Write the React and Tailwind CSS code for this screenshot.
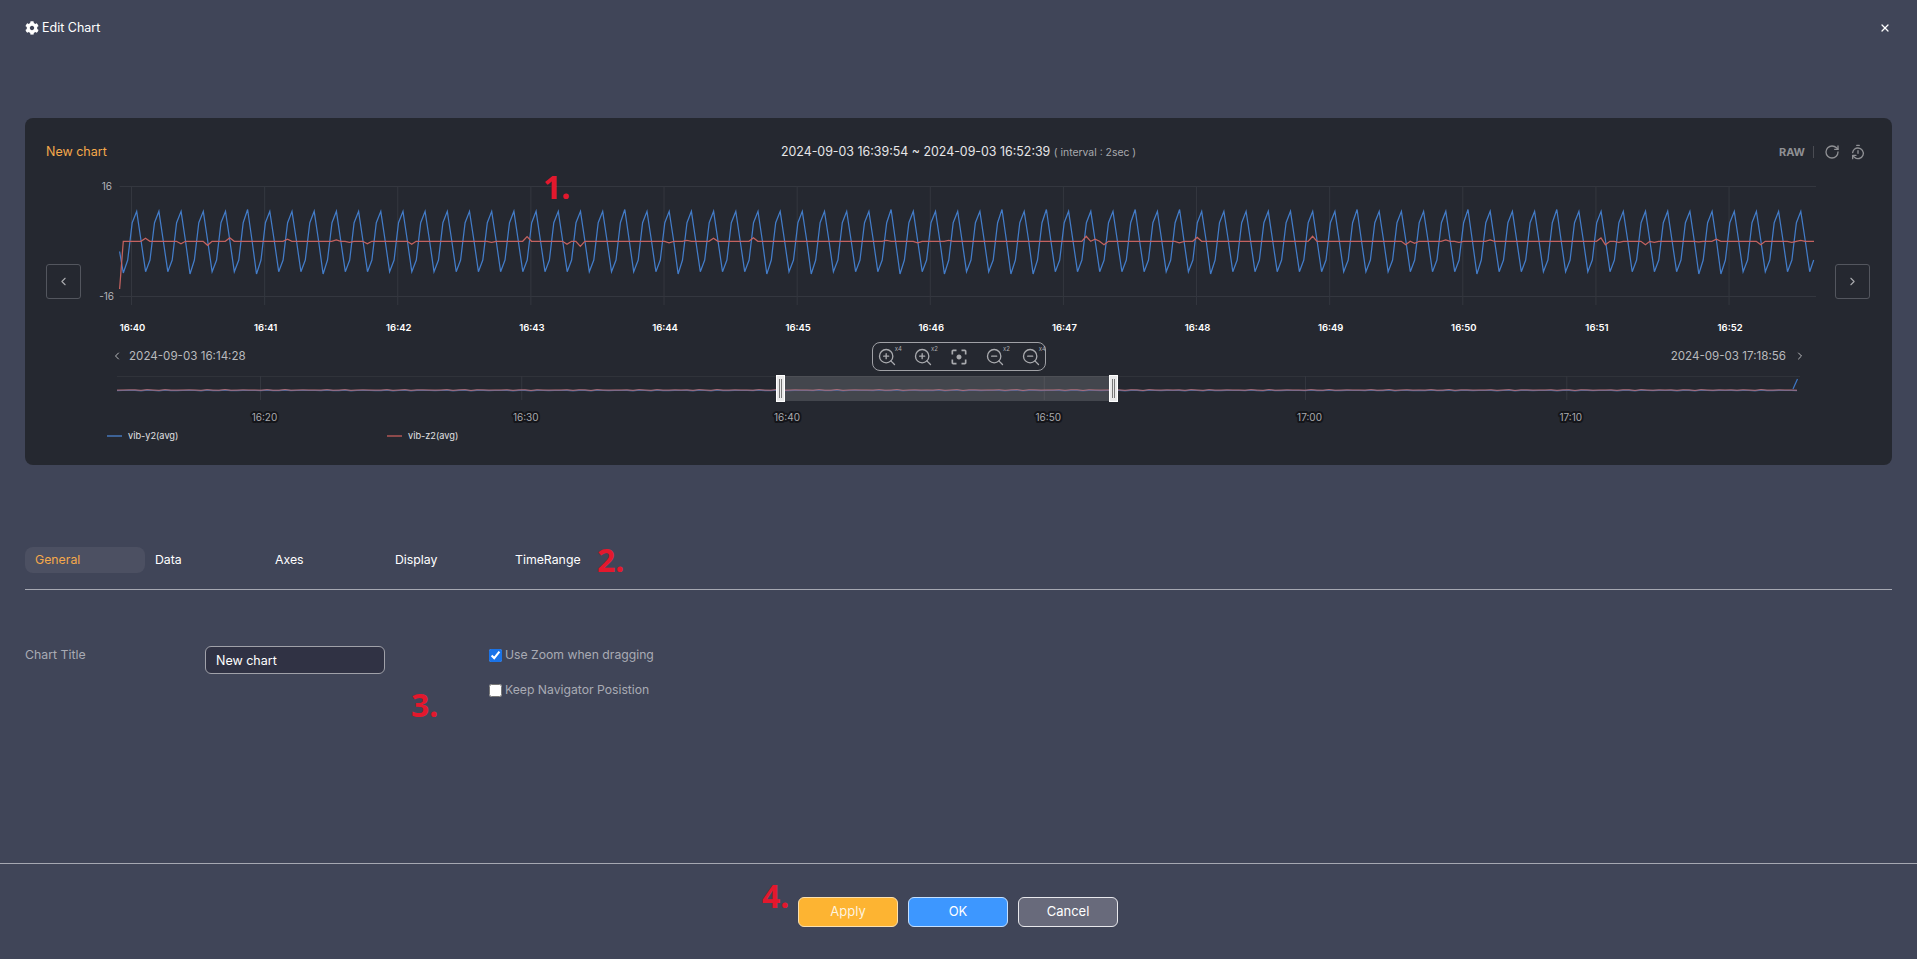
import React from "react";
import { ChevronLeft, ChevronRight, RotateCw, TimerReset, X, ZoomIn, ZoomOut } from "lucide-react";
import { FaCog } from "react-icons/fa";
import { MdFilterCenterFocus } from "react-icons/md";

// chart data, read off the picture (page coordinates, the svg viewBoxes use them too)
const STEP = 133.13 / 30;
const PERIOD = STEP * 5;
const tallPeaks = [5, 22, 34, 39, 41, 45, 47, 55, 60, 64];
const deepTroughs = [2, 5, 8, 24, 28, 30, 34, 36, 39, 40, 48, 60, 70, 71];
const bumps = [
  [145, -3], [181, 2.5], [207, 4], [230.6, -3.5], [287, -2], [335.5, -1.5], [349, 1], [367, 2.5],
  [411, 3], [490, 1], [527, -4.7], [566.7, 3], [581.7, 5], [669, 1.5], [685.7, -1], [713, -3],
  [753, -3.5], [886.7, -1], [916.7, 1.5], [948, -1], [1086, -5], [1095, -2], [1104, 3.5],
  [1178, 1.5], [1196.7, -4], [1312.7, -5], [1406, 3.5], [1415, 2], [1445, -1.5], [1460, 1],
  [1490, -1.5], [1600, -3.5], [1606, 3.5], [1620, 1], [1645, 3.5], [1654, 1], [1700, 0.5],
  [1716.7, -2], [1760, 3.5], [1790, 1], [1801.7, -1],
];

const bluePoints = () => {
  const pts = [[119.6, 251.5], [123.3, 273], [127.7, 260], [132.2, 222.7]];
  for (let k = 0; k < 76; k++) {
    const p = 136.7 + PERIOD * k;
    const peak = tallPeaks.includes(k) ? 209.5 : 211.3;
    const trough = deepTroughs.includes(k) ? 274 : 271.7;
    pts.push([p, peak], [p + STEP, 241], [p + STEP * 2, trough]);
    if (k === 75) {
      pts.push([p + STEP * 2 + 4, 260]);
      break;
    }
    pts.push([p + STEP * 3, 260], [p + STEP * 4, 222.7]);
  }
  return pts.map(([x, y]) => `${x.toFixed(1)},${y}`).join(" ");
};

const redPoints = () => {
  const pts = [[119.6, 289], [123.3, 241.3]];
  for (let x = 127.7; x < 1812; x += STEP) {
    const hit = bumps.find(([bx]) => Math.abs(bx - x) <= STEP / 2);
    pts.push([x, 241.3 + (hit ? hit[1] : 0)]);
  }
  pts.push([1814, 241.3]);
  return pts.map(([x, y]) => `${x.toFixed(1)},${y}`).join(" ");
};

const navLine = (shift, amp) => {
  const pts = [];
  for (let x = 117; x <= 1797; x += 6) {
    pts.push(`${x},${(390 + shift + Math.sin(x * 0.37) * Math.sin(x * 0.051) * amp).toFixed(1)}`);
  }
  return pts.join(" ");
};

const minutes = ["16:40", "16:41", "16:42", "16:43", "16:44", "16:45", "16:46", "16:47", "16:48", "16:49", "16:50", "16:51", "16:52"];
const navTicks = ["16:20", "16:30", "16:40", "16:50", "17:00", "17:10"];

const MainChart = () => (
  <svg viewBox="85 175 1745 160" className="block w-[1745px] h-[160px] ml-1 shrink-0">
    <line x1="119.6" x2="1816" y1="186.5" y2="186.5" stroke="#34373f" />
    <line x1="119.6" x2="1816" y1="296.5" y2="296.5" stroke="#34373f" />
    {minutes.map((m, i) => (
      <line key={m} x1={131.5 + 133.13 * i} x2={131.5 + 133.13 * i} y1="186" y2="305" stroke="#34373f" />
    ))}
    <text x="112" y="190" textAnchor="end" className="fill-[#b4b5b9] text-[10px]">16</text>
    <text x="114" y="300" textAnchor="end" className="fill-[#b4b5b9] text-[10px]">-16</text>
    <polyline points={bluePoints()} fill="none" stroke="#437cc8" strokeWidth="1.25" />
    <polyline points={redPoints()} fill="none" stroke="#c4625f" strokeWidth="1.25" />
    {minutes.map((m, i) => (
      <text key={m} x={132.5 + 133.13 * i} y="331" textAnchor="middle" className="fill-white text-[9.5px] font-semibold">{m}</text>
    ))}
  </svg>
);

const Navigator = () => (
  <svg viewBox="85 372 1745 54" className="block w-[1745px] h-[54px] ml-[60px] mt-px">
    <line x1="117" x2="1800" y1="376.5" y2="376.5" stroke="#30333a" />
    {navTicks.map((t, i) => (
      <line key={t} x1={260.5 + 261.26 * i} x2={260.5 + 261.26 * i} y1="376" y2="400" stroke="#34373f" />
    ))}
    <rect x="780" y="376" width="333" height="25" fill="#ffffff" fillOpacity="0.14" />
    <polyline points={navLine(0.5, 0.4)} fill="none" stroke="#3f6296" strokeWidth="1.2" />
    <polyline points={navLine(0, 0.4)} fill="none" stroke="#b8707a" strokeWidth="1" />
    <polyline points="1793,389 1797.5,379" fill="none" stroke="#3f78c6" strokeWidth="1.2" />
    {[776.5, 1109.5].map((x) => (
      <g key={x}>
        <rect x={x} y="375.5" width="8" height="26" fill="#e9e9ea" stroke="#ffffff" />
        <line x1={x + 3} x2={x + 3} y1="379" y2="398" stroke="#777" />
        <line x1={x + 5} x2={x + 5} y1="379" y2="398" stroke="#777" />
      </g>
    ))}
    {navTicks.map((t, i) => (
      <text
        key={t}
        x={264.5 + 261.26 * i}
        y="421"
        textAnchor="middle"
        stroke="#14151a"
        strokeWidth="4"
        strokeLinejoin="round"
        paintOrder="stroke"
        className="fill-[#a9aaae] text-[10px]"
      >
        {t}
      </text>
    ))}
  </svg>
);

const ZoomBtn = ({ Icon, label }) => (
  <span className="relative flex w-9 shrink-0 justify-center text-[#a9aaae]">
    <Icon size={20} strokeWidth={1.6} />
    {label && <span className="absolute top-[-1px] right-[3px] text-[6px] leading-none">{label}</span>}
  </span>
);

const ArrowBtn = ({ children, className }) => (
  <button className={`flex items-center justify-center w-[35px] h-[35px] mt-[89px] shrink-0 rounded-[3px] border border-[#53565e] text-[#a9aaae] ${className}`}>
    {children}
  </button>
);

const Mark = ({ className, children }) => (
  <span className={`absolute font-['Noto_Sans',sans-serif] text-[32px] leading-none font-bold text-[#e3182d] ${className}`}>
    {children}
  </span>
);

export default function App() {
  return (
    <div className="relative flex flex-col h-[959px] overflow-hidden bg-[#404558] text-white font-['Inter','Liberation_Sans',sans-serif]">
      <header className="flex items-center justify-between h-14 px-[25px]">
        <div className="flex items-center gap-[3px] text-[12.5px]">
          <FaCog size={14} />
          Edit Chart
        </div>
        <X size={12} strokeWidth={2.5} className="mr-[1px]" />
      </header>

      <section className="mx-[25px] mt-[62px] h-[347px] rounded-lg bg-[#252830]">
        <div className="grid grid-cols-[1fr_auto_1fr] items-center h-6 mt-[22px] px-[21px]">
          <span className="text-[12.5px] text-[#f5a94b]">New chart</span>
          <span className="text-[12.4px] text-[#e6e6e8]">
            2024-09-03 16:39:54 ~ 2024-09-03 16:52:39 <span className="text-[10.4px] text-[#a9aaae]">( interval : 2sec )</span>
          </span>
          <div className="flex items-center justify-end gap-[10px] pr-[5px] text-[#8f9094]">
            <span className="-mr-[2px] text-[11px] font-bold">RAW</span>
            <span className="w-px h-[12px] bg-[#4a4c53]" />
            <RotateCw size={16} />
            <TimerReset size={16} />
          </div>
        </div>

        <div className="flex pl-[21px] mt-[11px]">
          <ArrowBtn><ChevronLeft size={13} /></ArrowBtn>
          <MainChart />
          <ArrowBtn className="ml-[5px]"><ChevronRight size={13} /></ArrowBtn>
        </div>

        <div className="grid grid-cols-[1fr_auto_1fr] items-center h-[29px] mt-[7px] px-[86px] text-[11.6px] text-[#b9babd]">
          <div className="flex items-center gap-[5px]">
            <ChevronLeft size={12} />
            <span className="ml-[1px]">2024-09-03 16:14:28</span>
          </div>
          <div className="flex items-center justify-center w-[174px] h-[29px] ml-px rounded-lg border border-[#a0a1a6]">
            <ZoomBtn Icon={ZoomIn} label="x4" />
            <ZoomBtn Icon={ZoomIn} label="x2" />
            <span className="flex w-9 shrink-0 justify-center text-[#a9aaae]"><MdFilterCenterFocus size={20} /></span>
            <ZoomBtn Icon={ZoomOut} label="x2" />
            <ZoomBtn Icon={ZoomOut} label="x4" />
          </div>
          <div className="flex items-center justify-end gap-[8px]">
            <span>2024-09-03 17:18:56</span>
            <ChevronRight size={12} />
          </div>
        </div>

        <Navigator />

        <div className="flex items-center h-3 mt-1 ml-[82px] text-[9.2px] text-[#e2e2e4]">
          <div className="flex items-center gap-[6px] w-[280px]">
            <span className="w-[15px] h-[1.5px] bg-[#3d6296]" />
            vib-y2(avg)
          </div>
          <div className="flex items-center gap-[6px]">
            <span className="w-[15px] h-[1.5px] bg-[#8d4a4b]" />
            vib-z2(avg)
          </div>
        </div>
      </section>

      <nav className="flex mx-[25px] mt-[82px] pb-[16px] border-b border-[#a6a8b2] text-[12.3px]">
        {["General", "Data", "Axes", "Display", "TimeRange"].map((tab, i) => (
          <span
            key={tab}
            className={`w-[120px] h-[26px] pl-[10px] leading-[26px] rounded-lg ${i === 0 ? "bg-[#4c5062] text-[#f5a94b]" : "text-white"}`}
          >
            {tab}
          </span>
        ))}
      </nav>

      <div className="flex items-start mx-[25px] mt-[56px]">
        <label className="w-[180px] mt-[1px] text-[12.3px] leading-[16px] text-[#a9abb4]">Chart Title</label>
        <input
          readOnly
          value="New chart"
          className="w-[180px] h-[28px] px-[10px] rounded-md border border-[#a0a1a9] bg-[#303244] text-[12.5px] text-white outline-none"
        />
        <div className="flex flex-col gap-[19px] ml-[104px] mt-[1px] text-[12.2px] leading-[16px] text-[#a9abb4]">
          <label className="flex items-center gap-[3px]">
            <input type="checkbox" readOnly checked className="w-[13px] h-[13px] accent-[#1a73e8]" />
            Use Zoom when dragging
          </label>
          <label className="flex items-center gap-[3px]">
            <input type="checkbox" readOnly checked={false} className="w-[13px] h-[13px]" />
            Keep Navigator Posistion
          </label>
        </div>
      </div>

      <footer className="flex justify-center gap-[10px] mt-auto h-[96px] pt-[33px] pr-[1px] border-t border-[#a6a8b2] text-[13px]">
        <button className="w-[100px] h-[30px] rounded-md border border-[#fbe0ae] bg-[#fdb432] text-[#fdf3df]">Apply</button>
        <button className="w-[100px] h-[30px] rounded-md border border-[#c5e0ff] bg-[#3d97ff] text-white">OK</button>
        <button className="w-[100px] h-[30px] rounded-md border border-[#e8e8ec] bg-[#686a7b] text-white">Cancel</button>
      </footer>

      <Mark className="left-[543px] top-[171px]">1.</Mark>
      <Mark className="left-[597px] top-[544px]">2.</Mark>
      <Mark className="left-[411px] top-[689px]">3.</Mark>
      <Mark className="left-[762px] top-[880px]">4.</Mark>
    </div>
  );
}
